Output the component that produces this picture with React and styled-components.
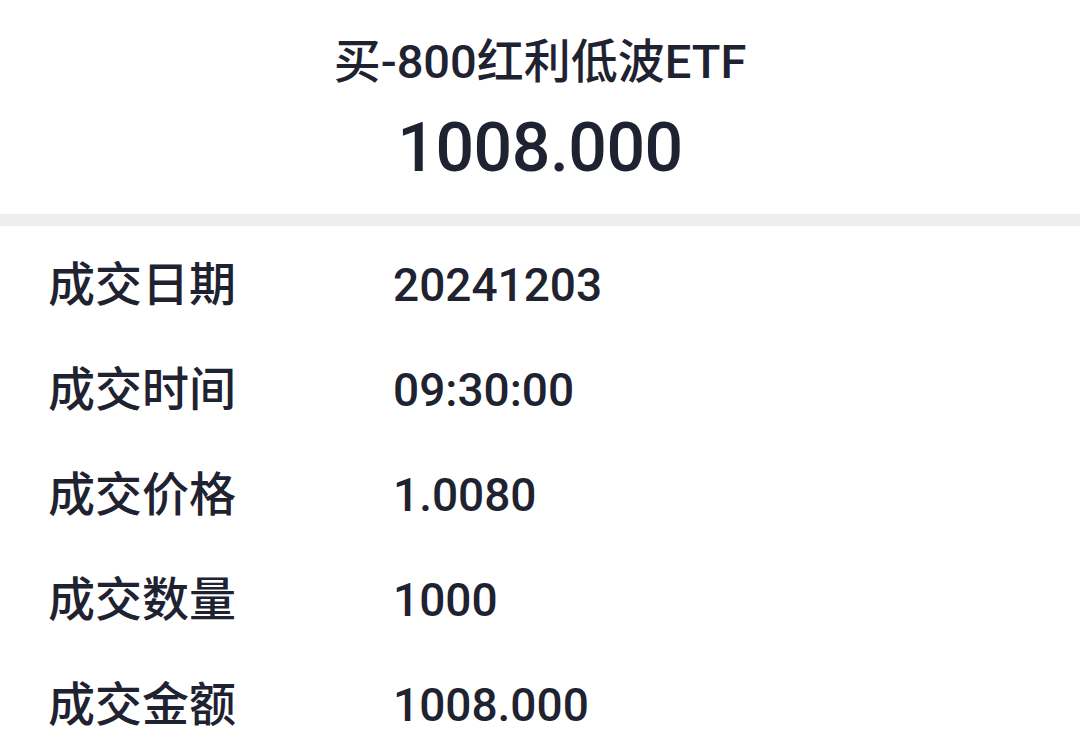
import styled, { createGlobalStyle } from "styled-components";

const GlobalStyle = createGlobalStyle`
  html, body {
    margin: 0;
    padding: 0;
    background: #ffffff;
  }
  body {
    font-family: Roboto, "Noto Sans CJK SC", sans-serif;
    color: #1f2230;
  }
`;

const Page = styled.div`
  width: 1080px;
  min-height: 734px;
  background: #ffffff;
  overflow: hidden;
`;

const Header = styled.header`
  display: flex;
  flex-direction: column;
  align-items: center;
  padding: 30px 0 12px;
`;

const Title = styled.h1`
  margin: 0;
  font-size: 47px;
  font-weight: 500;
  line-height: 64px;
`;

const Amount = styled.div`
  font-size: 68px;
  font-weight: 500;
  line-height: 108px;
  letter-spacing: -0.5px;
`;

const Divider = styled.div`
  height: 12px;
  background: #eeeeee;
`;

const List = styled.dl`
  margin: 0;
  padding: 6px 0 0 48px;
`;

const Row = styled.div`
  display: grid;
  grid-template-columns: 345px 1fr;
  align-items: center;
  height: 105px;
`;

const Label = styled.dt`
  margin: 0;
  font-size: 47px;
  font-weight: 500;
  line-height: 1;
`;

const Value = styled.dd`
  margin: 0;
  font-size: 46px;
  font-weight: 500;
  line-height: 1;
`;

const rows = [
  ["成交日期", "20241203"],
  ["成交时间", "09:30:00"],
  ["成交价格", "1.0080"],
  ["成交数量", "1000"],
  ["成交金额", "1008.000"],
];

export default function App() {
  return (
    <Page>
      <GlobalStyle />
      <Header>
        <Title>买-800红利低波ETF</Title>
        <Amount>1008.000</Amount>
      </Header>
      <Divider />
      <List>
        {rows.map(([label, value]) => (
          <Row key={label}>
            <Label>{label}</Label>
            <Value>{value}</Value>
          </Row>
        ))}
      </List>
    </Page>
  );
}
